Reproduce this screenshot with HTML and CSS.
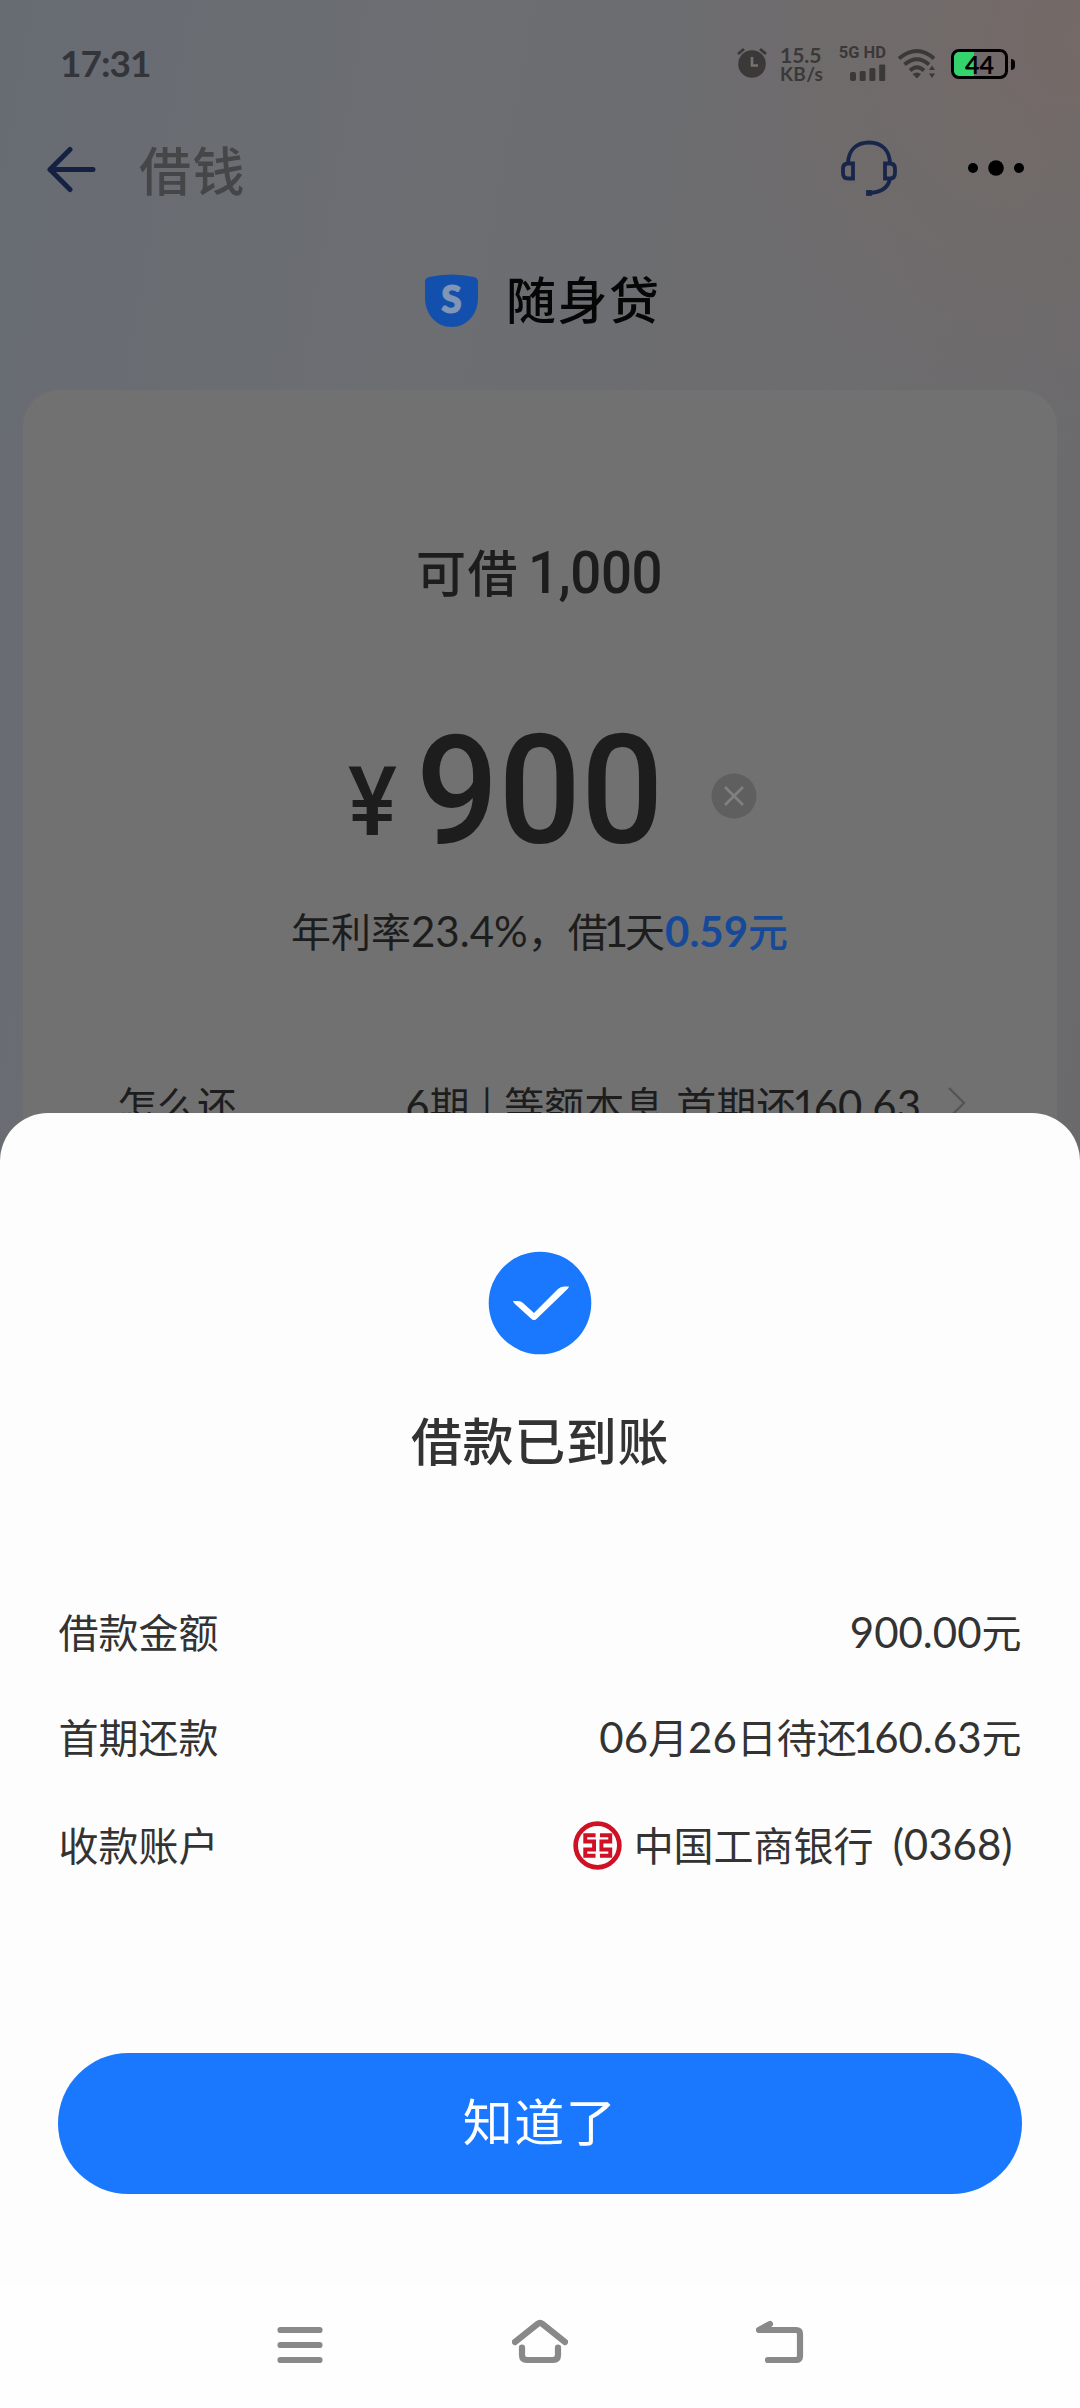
FILE: index.html
```html
<!DOCTYPE html>
<html lang="zh-CN">
<head>
<meta charset="utf-8">
<title>借钱</title>
<link rel="stylesheet" href="styles.css">
</head>
<body>
<main class="screen">
  <header class="status">
    <span class="clock">17:31</span>
    <svg class="alarm" width="32" height="32" viewBox="0 0 32 32">
      <circle cx="16" cy="18" r="13.8" fill="#3b3838"/>
      <path d="M2 8 8 3M30 8 24 3" stroke="#3b3838" stroke-width="2.8"/>
      <path d="M16 11v8.500h6" fill="none" stroke="#777171" stroke-width="2.600"/>
    </svg>
    <span class="speed"><span>15.5</span><span>KB/s</span></span>
    <span class="signal">
      <span class="net">5G HD</span>
      <svg width="36" height="17" viewBox="0 0 36 17" fill="#3b3838">
        <rect x="0" y="8" width="6" height="9" rx="2"/><rect x="9.700" y="7" width="6" height="10" rx="1.500"/><rect x="19.400" y="4" width="6" height="13" rx="1.500"/><rect x="29.200" y="0.500" width="6" height="16.500" rx="1"/>
      </svg>
    </span>
    <svg class="wifi" width="38" height="30" viewBox="0 0 38 30">
      <g fill="none" stroke="#3b3838" stroke-width="3.800"><path d="M1 9.500Q19-5.500 36 9.500"/><path d="M6.500 15.500Q19 5 31 15.500"/><path d="M12 21.500Q19 15 26 21.500"/></g>
      <path d="M14.500 25Q19 22 23 25L19 29.500Z" fill="#3b3838"/>
      <path d="M31 21 34 16.500 37 21ZM31 24.500h6L34 29Z" fill="#3b3838"/>
    </svg>
    <span class="battery"><span class="cell">44</span><i class="nub"></i></span>
  </header>

  <nav class="topbar">
    <svg class="back" width="52" height="48" viewBox="0 0 52 48" fill="none" stroke="#142143" stroke-width="5" stroke-linecap="round" stroke-linejoin="round"><path d="M24 4.500 4 24.500 24 44.500M4 24.500H47"/></svg>
    <h1>借钱</h1>
    <svg class="headset" width="60" height="58" viewBox="0 0 60 58" fill="none" stroke="#18264b" stroke-width="3.800">
      <path d="M9 25C9 11 17.500 3.500 30 3.500S51 11 51 25"/>
      <path d="M14 24.500V39.500H9Q4 39.500 4 34V30Q4 24.500 9 24.500Z"/><path d="M46 24.500V39.500H51Q56 39.500 56 34V30Q56 24.500 51 24.500Z"/>
      <path d="M51 40C49 49 41 54 28 54"/><path d="M29 53v2h2v-2z"/>
    </svg>
    <svg class="more" width="60" height="20" viewBox="0 0 60 20"><circle cx="7" cy="10" r="5"/><circle cx="30" cy="10" r="7.800"/><circle cx="53" cy="10" r="5"/></svg>
  </nav>

  <section class="brand">
    <svg width="53" height="53" viewBox="0 0 53 53"><path d="M0 8Q0 4 4 3 26.500-2 49 3 53 4 53 8V24C53 40 42 53 26.500 53S0 40 0 24Z" fill="#1350ad"/><text class="mark" x="26.500" y="38.500" text-anchor="middle">S</text></svg>
    <h2>随身贷</h2>
  </section>

  <section class="card">
    <p class="limit">可借<span class="limit-num">1,000</span></p>
    <div class="amount">
      <span class="yen">¥</span><span class="sum">900</span>
      <svg class="clear" width="46" height="46" viewBox="0 0 46 46"><circle cx="23" cy="23" r="22.500" fill="#5f5f5f"/><path d="M14 14 32 32M32 14 14 32" stroke="#808080" stroke-width="2.600"/></svg>
    </div>
    <p class="rate">年利率<b class="num">23.4%</b>，借<b class="num one">1</b>天<span class="fee"><b class="num">0.59</b>元</span></p>
    <div class="plan">
      <span>怎么还</span>
      <span class="plan-value"><b class="num">6</b>期 | 等额本息 首期还<b class="num"><span class="one">1</span>60.63</b></span>
      <svg width="20" height="34" viewBox="0 0 20 34" fill="none" stroke="#555" stroke-width="2.400"><path d="M2 1 17 16 2 31"/></svg>
    </div>
  </section>

  <section class="sheet">
    <svg class="tick" width="104" height="104" viewBox="0 0 104 104"><circle cx="52" cy="52" r="51.300" fill="#1a78ff"/><path d="M25 50h5q3 0 5 2l11 10 24-24q2.500-2.500 6-2.500h5q-.5 1.500-2 3L49 67.500q-3 3-6 0L27 53Q25 51 25 50Z" fill="#fff"/></svg>
    <h3>借款已到账</h3>
    <dl class="details">
      <div><dt>借款金额</dt><dd><b class="num">900.00</b>元</dd></div>
      <div><dt>首期还款</dt><dd><b class="num">06</b>月<b class="num">26</b>日待还<b class="num"><span class="one">1</span>60.63</b>元</dd></div>
      <div class="bank"><dt>收款账户</dt><dd>
        <svg width="49" height="49" viewBox="0 0 50 50" fill="none" stroke="#cf1126"><circle cx="25" cy="25" r="22.300" stroke-width="4.800"/><path d="M23 14.500H12.500V21H21.500V29H12.500V35.500H23M27.500 14.500H38V21H29V29H38V35.500H27.500" stroke-width="4"/></svg>
        <span>中国工商银行</span><b class="num tail">(0368)</b></dd></div>
    </dl>
    <button class="ok">知道了</button>
    <footer class="sysnav">
      <svg width="46" height="48" viewBox="0 0 46 48"><path d="M3.500 12H42.500M3.500 27H42.500M3.500 42H42.500"/></svg>
      <svg width="56" height="48" viewBox="0 0 56 48"><path d="M3 24 25.500 6Q28 4 30.500 6L53 24M10 29.500V37Q10 42 15 42H41Q46 42 46 37V29.500"/></svg>
      <svg width="50" height="48" viewBox="0 0 50 48"><path d="M14 6 3 12H40Q44 12 44 16V38Q44 42 40 42H12"/></svg>
    </footer>
  </section>
</main>
</body>
</html>
```

FILE: styles.css
```css
* { box-sizing: border-box; margin: 0; padding: 0; }
body { font-family: "Noto Sans CJK SC", sans-serif; }
h1, h2, h3 { font-weight: 500; }
svg { display: block; flex: none; }

.screen {
  position: relative;
  width: 1080px;
  height: 2408px;
  overflow: hidden;
  background:
    radial-gradient(circle at 1080px 40px, rgba(118, 105, 101, .75), rgba(112, 106, 106, 0) 400px),
    linear-gradient(100deg, #676c73 0, #6c6e72 30%, #6d6c6e 60%, #69696c 100%);
}
.num { font-family: Lato, sans-serif; font-size: 42px; font-weight: 400; }
.one { margin-left: -4px; letter-spacing: -3px; }

.status { display: flex; height: 118px; padding: 8px 60px 0 60px; align-items: center; color: #3b3838; }
.clock { width: 676px; font: 700 37px/44px Lato, sans-serif; letter-spacing: -1px; color: #33353a; }
.alarm { margin-top: -2px; }
.speed { display: flex; flex-direction: column; width: 46px; margin-left: 12px; padding-top: 1px; font: 700 21px/19px Lato, sans-serif; }
.speed span:last-child { font-size: 19px; letter-spacing: .3px; }
.signal { display: flex; flex-direction: column; align-items: flex-end; width: 49px; margin-left: 11px; gap: 4px; }
.net { font: 700 16.5px/14px Roboto, sans-serif; white-space: nowrap; }
.wifi { margin-left: 12px; margin-top: 2px; }
.battery { display: flex; align-items: center; gap: 3px; margin-left: 15px; margin-top: 2px; }
.cell {
  width: 57px; height: 30px; border: 3px solid #000; border-radius: 8px;
  background: linear-gradient(90deg, #34d36e 20px, transparent 20px);
  font: 700 25px/25px Lato, sans-serif; color: #000; text-align: center;
}
.nub { width: 4px; height: 11px; border-radius: 0 5px 5px 0; background: #000; }

.topbar { display: flex; height: 102px; padding: 0 54px 0 46px; align-items: center; }
.topbar h1 { margin-left: 41px; font-size: 52px; line-height: 60px; letter-spacing: 1.5px; color: #454648; }
.headset { margin: -2px 0 0 auto; }
.more { margin: -3px 0 0 67px; }

.brand { display: flex; height: 170px; padding: 0 0 8px 425px; align-items: center; }
.brand svg { margin-top: -2px; }
.brand h2 { margin: -8px 0 0 28px; font-size: 50px; line-height: 60px; letter-spacing: 1.5px; color: #060607; }
.mark { font: 900 37px Lato, sans-serif; fill: #8195b5; stroke: #8195b5; stroke-width: 1.2px; }

.card { height: 800px; margin: 0 23px; border-radius: 36px; background: #717171; color: #1d1d1d; }
.limit { height: 306px; padding: 150px 0 0 393px; font-size: 50px; font-weight: 500; line-height: 60px; letter-spacing: 1.5px; white-space: nowrap; }
.limit-num { display: inline-block; margin-left: 9px; font: 500 60px/60px Roboto, sans-serif; letter-spacing: -.5px; transform: translateY(1px) scaleX(.91); transform-origin: left; }
.amount { display: flex; height: 186px; padding: 2px 0 0 325px; align-items: baseline; font-family: Roboto, sans-serif; font-weight: 500; line-height: 186px; }
.yen { width: 68px; font-size: 97px; line-height: 170px; transform: translateY(-8px) scaleX(.95); transform-origin: left; }
.sum { width: 295px; font-size: 152px; transform: scaleX(.955); transform-origin: left; }
.clear { align-self: center; margin-top: 12px; }
.rate { height: 140px; padding: 18px 0 0 268px; font-size: 40px; line-height: 60px; white-space: nowrap; }
.fee, .fee .num { font-weight: 500; color: #164a99; }
.fee .num { font-weight: 700; }
.plan { display: flex; height: 60px; padding: 0 90px 0 94px; margin-top: 52px; align-items: center; font-size: 40px; line-height: 60px; }
.plan-value { margin-left: auto; margin-right: 26px; white-space: nowrap; word-spacing: 3px; }

.sheet {
  position: absolute; left: 0; right: 0; top: 1113px; bottom: 0;
  display: flex; flex-direction: column; align-items: center;
  padding-top: 138px; border-radius: 48px 48px 0 0; background: #fdfdfd; color: #333;
}
.sheet h3 { margin-top: 54px; font-size: 51px; line-height: 60px; letter-spacing: .6px; }
.details { width: 963px; margin-top: 132px; font-size: 40px; line-height: 60px; }
.details > div { display: flex; justify-content: space-between; height: 105px; }
.details dd { display: flex; height: 60px; align-items: baseline; white-space: nowrap; }
.details .bank { margin-top: 3px; padding-right: 9px; }
.details .bank dd { align-items: center; }
.bank svg { margin: 2px 12px 0 0; }
.bank .tail { margin-left: 19px; }
.ok { width: 964px; height: 141px; margin-top: 134px; padding-bottom: 8px; border: 0; border-radius: 71px; background: #1a78ff; color: #fff; font: 400 50px/133px "Noto Sans CJK SC", sans-serif; letter-spacing: 1.5px; }
.sysnav { display: flex; justify-content: space-between; width: 100%; height: 123px; margin-top: auto; padding: 33px 274px 0 277px; background: #fefefe; fill: none; stroke: #898989; stroke-width: 6.200; stroke-linecap: round; stroke-linejoin: round; }
```
